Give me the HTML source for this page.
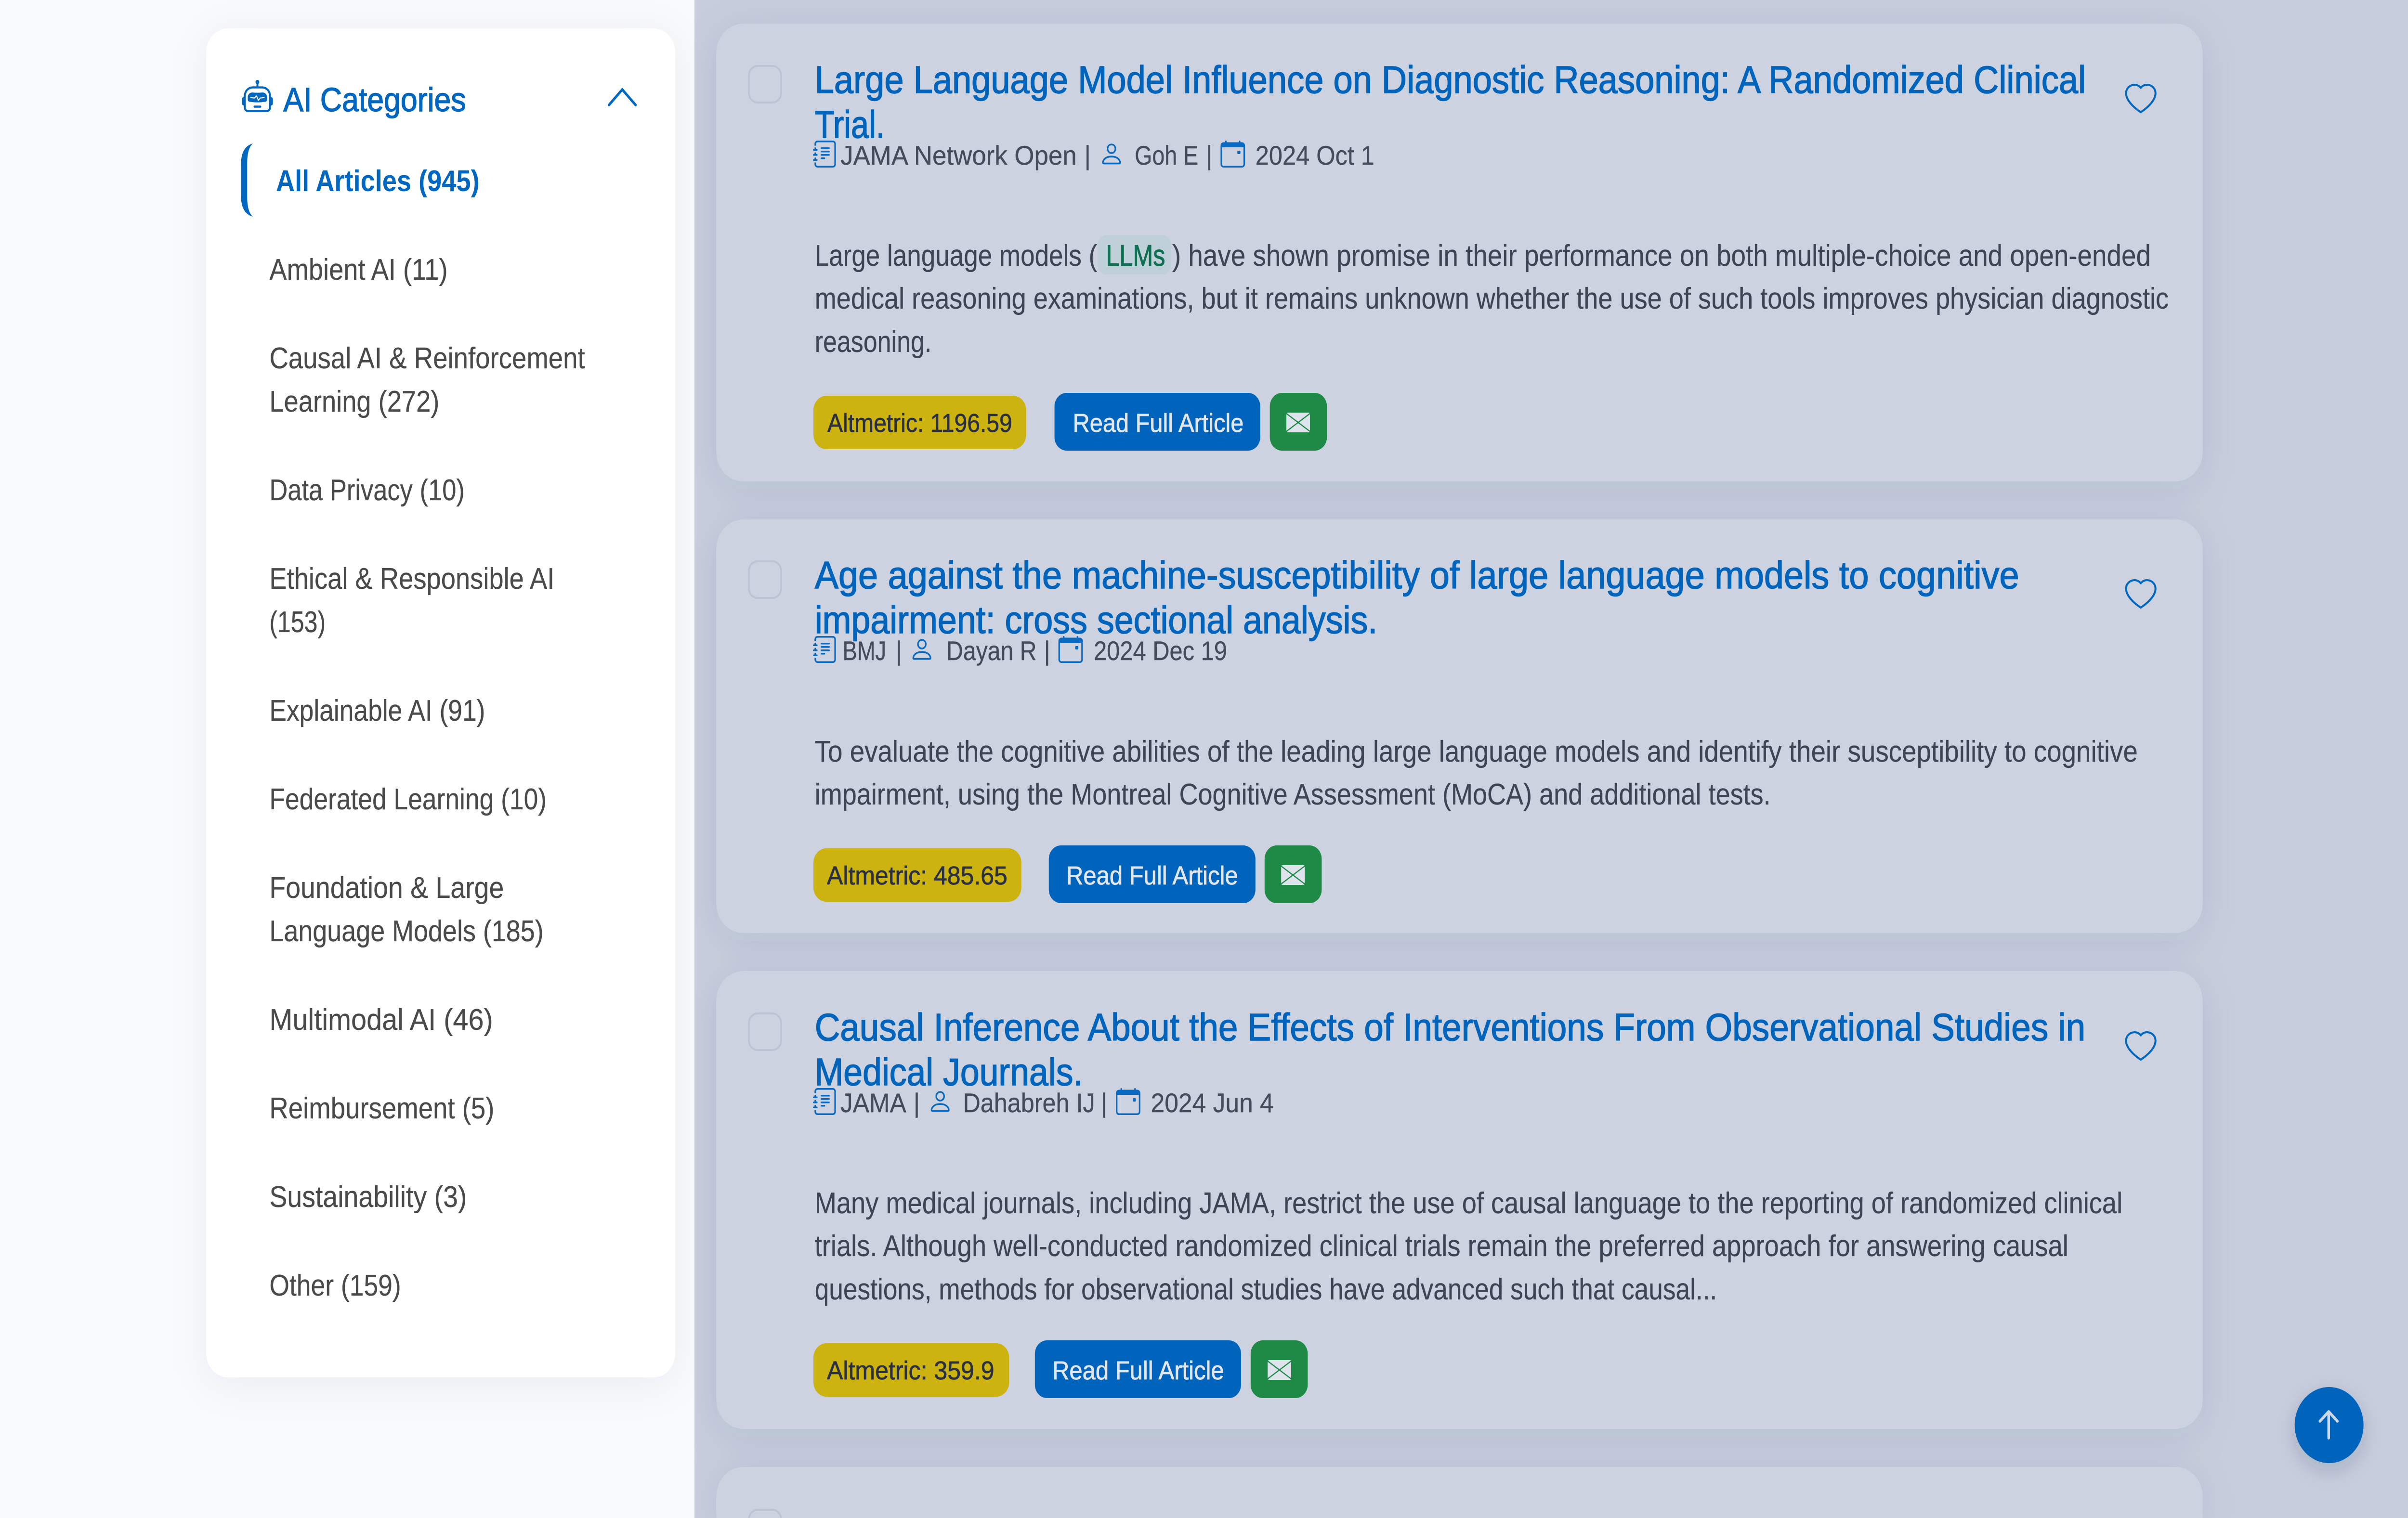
<!DOCTYPE html>
<html lang="en"><head><meta charset="utf-8"><title>AI Articles</title>
<style>
html,body{margin:0;padding:0;width:100%;height:100%;overflow:hidden;background:#f9fafc}
svg.root{position:fixed;left:0;top:0;width:100vw;height:100vh;display:block}
text{font-family:"Liberation Sans",Arial,sans-serif}
.t{font-size:80px;fill:#0064bd;stroke:#0064bd;stroke-width:1.5px}
.m{font-size:56px;fill:#464b5c;stroke:#464b5c;stroke-width:.4px}
.a{font-size:62px;fill:#3f4455;stroke:#3f4455;stroke-width:.3px}
.s{font-size:62px;fill:#4a4a4a;stroke:#4a4a4a;stroke-width:.3px}
.b{font-size:54px;fill:#2a3040;stroke:#2a3040;stroke-width:.8px}
.r{font-size:54px;fill:#e2e6ef;stroke:#e2e6ef;stroke-width:.8px}
</style></head><body>
<svg class="root" viewBox="0 0 5524 3153" preserveAspectRatio="none" xmlns="http://www.w3.org/2000/svg">
<defs>
<filter id="blur" filterUnits="userSpaceOnUse" x="0" y="0" width="5524" height="3153"><feGaussianBlur stdDeviation="42"/></filter>
<filter id="blur2" filterUnits="userSpaceOnUse" x="5100" y="2700" width="424" height="453"><feGaussianBlur stdDeviation="21"/></filter>
<clipPath id="rightClip"><rect x="1593" y="0" width="3931" height="3153"/></clipPath>
<path id="heart" d="m8 2.748-.717-.737C5.6.281 2.514.878 1.4 3.053c-.523 1.023-.641 2.5.314 4.385.92 1.815 2.834 3.989 6.286 6.357 3.452-2.368 5.365-4.542 6.286-6.357.955-1.886.838-3.362.314-4.385C13.486.878 10.4.28 8.717 2.01L8 2.748zM8 15C-7.333 4.868 3.279-3.04 7.824 1.143c.06.055.119.112.176.171a3.12 3.12 0 0 1 .176-.17C12.72-3.042 23.333 4.867 8 15z"/>
<path id="journal" d="M5 10.5a.5.5 0 0 1 .5-.5h2a.5.5 0 0 1 0 1h-2a.5.5 0 0 1-.5-.5zm0-2a.5.5 0 0 1 .5-.5h5a.5.5 0 0 1 0 1h-5a.5.5 0 0 1-.5-.5zm0-2a.5.5 0 0 1 .5-.5h5a.5.5 0 0 1 0 1h-5a.5.5 0 0 1-.5-.5zm0-2a.5.5 0 0 1 .5-.5h5a.5.5 0 0 1 0 1h-5a.5.5 0 0 1-.5-.5zM3 0h10a2 2 0 0 1 2 2v12a2 2 0 0 1-2 2H3a2 2 0 0 1-2-2v-1h1v1a1 1 0 0 0 1 1h10a1 1 0 0 0 1-1V2a1 1 0 0 0-1-1H3a1 1 0 0 0-1 1v1H1V2a2 2 0 0 1 2-2zM1 5v-.5a.5.5 0 0 1 1 0V5h.5a.5.5 0 0 1 0 1h-2a.5.5 0 0 1 0-1H1zm0 3v-.5a.5.5 0 0 1 1 0V8h.5a.5.5 0 0 1 0 1h-2a.5.5 0 0 1 0-1H1zm0 3v-.5a.5.5 0 0 1 1 0v.5h.5a.5.5 0 0 1 0 1h-2a.5.5 0 0 1 0-1H1z"/>
<path id="person" d="M8 8a3 3 0 1 0 0-6 3 3 0 0 0 0 6Zm2-3a2 2 0 1 1-4 0 2 2 0 0 1 4 0Zm4 8c0 1-1 1-1 1H3s-1 0-1-1 1-4 6-4 6 3 6 4Zm-1-.004c-.001-.246-.154-.986-.832-1.664C11.516 10.68 10.289 10 8 10c-2.29 0-3.516.68-4.168 1.332-.678.678-.83 1.418-.832 1.664h10Z"/>
<path id="cal" d="M11 6.5a.5.5 0 0 1 .5-.5h1a.5.5 0 0 1 .5.5v1a.5.5 0 0 1-.5.5h-1a.5.5 0 0 1-.5-.5v-1zM3.5 0a.5.5 0 0 1 .5.5V1h8V.5a.5.5 0 0 1 1 0V1h1a2 2 0 0 1 2 2v11a2 2 0 0 1-2 2H2a2 2 0 0 1-2-2V3a2 2 0 0 1 2-2h1V.5a.5.5 0 0 1 .5-.5zM1 4v10a1 1 0 0 0 1 1h12a1 1 0 0 0 1-1V4H1z"/>
<g id="env"><rect x="-27" y="0" width="54" height="41" rx="3" fill="#dfe3ec"/><path d="M-27 2 27 39M27 2-27 39" stroke="#1e8a46" stroke-width="2.5" fill="none"/></g>
<rect id="check" x="1718" y="137" width="74" height="76" rx="20" fill="#ccd2e0" stroke="#bcc3d3" stroke-width="4"/>
</defs>

<!-- backgrounds -->
<rect x="0" y="0" width="5524" height="3153" fill="#f9fafc"/>
<rect x="473" y="73" width="1076" height="2802" rx="50" fill="#141e3c" fill-opacity=".06" filter="url(#blur)"/>
<rect x="473" y="59" width="1076" height="2802" rx="50" fill="#fff"/>
<rect x="1593" y="0" width="3931" height="3153" fill="#c7cddc"/>
<g clip-path="url(#rightClip)">
<g fill="#1e2850" fill-opacity=".09" filter="url(#blur)">
<rect x="1643" y="63" width="3410" height="951" rx="62"/>
<rect x="1643" y="1093" width="3410" height="859" rx="62"/>
<rect x="1643" y="2031" width="3410" height="951" rx="62"/>
<path d="M1705 3061H4991A62 62 0 0 1 5053 3123V3153H1643V3123A62 62 0 0 1 1705 3061Z"/>
</g>
<g fill="#ccd2e0">
<rect x="1643" y="49" width="3410" height="951" rx="62"/>
<rect x="1643" y="1079" width="3410" height="859" rx="62"/>
<rect x="1643" y="2017" width="3410" height="951" rx="62"/>
<path d="M1705 3047H4991A62 62 0 0 1 5053 3109V3153H1643V3109A62 62 0 0 1 1705 3047Z"/>
</g>
</g>

<!-- sidebar -->
<path transform="translate(555 166) scale(4.44)" fill="#0067c0" d="M6 12.5a.5.5 0 0 1 .5-.5h3a.5.5 0 0 1 0 1h-3a.5.5 0 0 1-.5-.5ZM3 8.062C3 6.76 4.235 5.765 5.53 5.886a26.58 26.58 0 0 0 4.94 0C11.765 5.765 13 6.76 13 8.062v1.157a.933.933 0 0 1-.765.935c-.845.147-2.34.346-4.235.346-1.895 0-3.39-.2-4.235-.346A.933.933 0 0 1 3 9.219V8.062Zm4.542-.827a.25.25 0 0 0-.217.068l-.92.9a24.767 24.767 0 0 1-1.871-.183.25.25 0 0 0-.068.495c.55.076 1.232.149 2.02.193a.25.25 0 0 0 .189-.071l.754-.736.847 1.71a.25.25 0 0 0 .404.062l.932-.97a25.286 25.286 0 0 0 1.922-.188.25.25 0 0 0-.068-.495c-.538.074-1.207.145-1.98.189a.25.25 0 0 0-.166.076l-.754.785-.842-1.7a.25.25 0 0 0-.182-.135Z"/>
<path transform="translate(555 166) scale(4.44)" fill="#0067c0" d="M8.5 1.866a1 1 0 1 0-1 0V3h-2A4.5 4.5 0 0 0 1 7.5V8a1 1 0 0 0-1 1v2a1 1 0 0 0 1 1v1a2 2 0 0 0 2 2h10a2 2 0 0 0 2-2v-1a1 1 0 0 0 1-1V9a1 1 0 0 0-1-1v-.5A4.5 4.5 0 0 0 10.5 3h-2V1.866ZM14 7.5V13a1 1 0 0 1-1 1H3a1 1 0 0 1-1-1V7.5A3.5 3.5 0 0 1 5.5 4h5A3.5 3.5 0 0 1 14 7.5Z"/>
<text x="650" y="231" font-size="70" fill="#0067c0" stroke="#0067c0" stroke-width="1.5" textLength="419" lengthAdjust="spacingAndGlyphs">AI Categories</text>
<path d="M1397 218 1427.500 186 1458 218" fill="none" stroke="#0067c0" stroke-width="5.500" stroke-linecap="round"/>
<path d="M580 298Q553 305 553 340L553 408Q553 443 580 450Q567 440 567 408L567 340Q567 308 580 298Z" fill="#0067c0"/>
<text x="633" y="397" font-size="62" font-weight="700" fill="#0067c0" textLength="467" lengthAdjust="spacingAndGlyphs">All Articles (945)</text>
<text class="s" x="618" y="581" textLength="409" lengthAdjust="spacingAndGlyphs">Ambient AI (11)</text>
<text class="s" x="618" y="765" textLength="724" lengthAdjust="spacingAndGlyphs">Causal AI &amp; Reinforcement</text>
<text class="s" x="618" y="855" textLength="390" lengthAdjust="spacingAndGlyphs">Learning (272)</text>
<text class="s" x="618" y="1039" textLength="448" lengthAdjust="spacingAndGlyphs">Data Privacy (10)</text>
<text class="s" x="618" y="1223" textLength="654" lengthAdjust="spacingAndGlyphs">Ethical &amp; Responsible AI</text>
<text class="s" x="618" y="1313" textLength="129" lengthAdjust="spacingAndGlyphs">(153)</text>
<text class="s" x="618" y="1497" textLength="495" lengthAdjust="spacingAndGlyphs">Explainable AI (91)</text>
<text class="s" x="618" y="1681" textLength="636" lengthAdjust="spacingAndGlyphs">Federated Learning (10)</text>
<text class="s" x="618" y="1865" textLength="538" lengthAdjust="spacingAndGlyphs">Foundation &amp; Large</text>
<text class="s" x="618" y="1955" textLength="629" lengthAdjust="spacingAndGlyphs">Language Models (185)</text>
<text class="s" x="618" y="2139" textLength="513" lengthAdjust="spacingAndGlyphs">Multimodal AI (46)</text>
<text class="s" x="618" y="2323" textLength="516" lengthAdjust="spacingAndGlyphs">Reimbursement (5)</text>
<text class="s" x="618" y="2507" textLength="453" lengthAdjust="spacingAndGlyphs">Sustainability (3)</text>
<text class="s" x="618" y="2691" textLength="302" lengthAdjust="spacingAndGlyphs">Other (159)</text>

<!-- card 1 -->
<use href="#check"/>
<text class="t" x="1869" y="193" textLength="2916" lengthAdjust="spacingAndGlyphs">Large Language Model Influence on Diagnostic Reasoning: A Randomized Clinical</text>
<text class="t" x="1869" y="286" textLength="161" lengthAdjust="spacingAndGlyphs">Trial.</text>
<use href="#heart" fill="#0067c0" transform="translate(4875 174) scale(4.5 4.1)"/>
<use href="#journal" fill="#0a69c0" transform="translate(1865 292) scale(3.5)"/>
<text class="m" x="1928" y="342" textLength="542" lengthAdjust="spacingAndGlyphs">JAMA Network Open</text>
<text class="m" x="2495" y="342" text-anchor="middle">|</text>
<use href="#person" fill="#0a69c0" transform="translate(2521 291) scale(3.6)"/>
<text class="m" x="2603" y="342" textLength="146" lengthAdjust="spacingAndGlyphs">Goh E</text>
<text class="m" x="2774" y="342" text-anchor="middle">|</text>
<use href="#cal" fill="#0a69c0" transform="translate(2800 292) scale(3.5)"/>
<text class="m" x="2880" y="342" textLength="273" lengthAdjust="spacingAndGlyphs">2024 Oct 1</text>
<rect x="2518" y="488" width="169" height="82" rx="20" fill="#bfd0d8"/>
<text class="a" x="1869" y="552" textLength="648" lengthAdjust="spacingAndGlyphs">Large language models (</text>
<text x="2537" y="552" font-size="62" fill="#0e6f52" stroke="#0e6f52" stroke-width="1" textLength="136" lengthAdjust="spacingAndGlyphs">LLMs</text>
<text class="a" x="2689" y="552" textLength="2245" lengthAdjust="spacingAndGlyphs">) have shown promise in their performance on both multiple-choice and open-ended</text>
<text class="a" x="1869" y="641" textLength="3106" lengthAdjust="spacingAndGlyphs">medical reasoning examinations, but it remains unknown whether the use of such tools improves physician diagnostic</text>
<text class="a" x="1869" y="731" textLength="268" lengthAdjust="spacingAndGlyphs">reasoning.</text>
<rect x="1866" y="822" width="488" height="111" rx="30" fill="#ccb30f"/>
<text class="b" x="1898" y="897" textLength="424" lengthAdjust="spacingAndGlyphs">Altmetric: 1196.59</text>
<rect x="2419" y="816" width="472" height="120" rx="28" fill="#0064bd"/>
<text class="r" x="2461" y="897" textLength="392" lengthAdjust="spacingAndGlyphs">Read Full Article</text>
<rect x="2913" y="816" width="131" height="120" rx="28" fill="#1e8a46"/>
<use href="#env" transform="translate(2978 857)"/>

<!-- card 2 -->
<use href="#check" y="1029"/>
<text class="t" x="1869" y="1222" textLength="2763" lengthAdjust="spacingAndGlyphs">Age against the machine-susceptibility of large language models to cognitive</text>
<text class="t" x="1869" y="1315" textLength="1291" lengthAdjust="spacingAndGlyphs">impairment: cross sectional analysis.</text>
<use href="#heart" fill="#0067c0" transform="translate(4875 1203) scale(4.5 4.1)"/>
<use href="#journal" fill="#0a69c0" transform="translate(1865 1321) scale(3.5)"/>
<text class="m" x="1933" y="1371" textLength="100" lengthAdjust="spacingAndGlyphs">BMJ</text>
<text class="m" x="2062" y="1371" text-anchor="middle">|</text>
<use href="#person" fill="#0a69c0" transform="translate(2086 1320) scale(3.6)"/>
<text class="m" x="2171" y="1371" textLength="207" lengthAdjust="spacingAndGlyphs">Dayan R</text>
<text class="m" x="2402" y="1371" text-anchor="middle">|</text>
<use href="#cal" fill="#0a69c0" transform="translate(2428 1321) scale(3.5)"/>
<text class="m" x="2509" y="1371" textLength="306" lengthAdjust="spacingAndGlyphs">2024 Dec 19</text>
<text class="a" x="1869" y="1582" textLength="3035" lengthAdjust="spacingAndGlyphs">To evaluate the cognitive abilities of the leading large language models and identify their susceptibility to cognitive</text>
<text class="a" x="1869" y="1671" textLength="2193" lengthAdjust="spacingAndGlyphs">impairment, using the Montreal Cognitive Assessment (MoCA) and additional tests.</text>
<rect x="1866" y="1762" width="477" height="111" rx="30" fill="#ccb30f"/>
<text class="b" x="1897" y="1837" textLength="414" lengthAdjust="spacingAndGlyphs">Altmetric: 485.65</text>
<rect x="2406" y="1756" width="474" height="120" rx="28" fill="#0064bd"/>
<text class="r" x="2446" y="1837" textLength="394" lengthAdjust="spacingAndGlyphs">Read Full Article</text>
<rect x="2901" y="1756" width="131" height="120" rx="28" fill="#1e8a46"/>
<use href="#env" transform="translate(2966 1797)"/>

<!-- card 3 -->
<use href="#check" y="1968"/>
<text class="t" x="1869" y="2161" textLength="2915" lengthAdjust="spacingAndGlyphs">Causal Inference About the Effects of Interventions From Observational Studies in</text>
<text class="t" x="1869" y="2254" textLength="615" lengthAdjust="spacingAndGlyphs">Medical Journals.</text>
<use href="#heart" fill="#0067c0" transform="translate(4875 2142) scale(4.5 4.1)"/>
<use href="#journal" fill="#0a69c0" transform="translate(1865 2260) scale(3.5)"/>
<text class="m" x="1928" y="2310" textLength="151" lengthAdjust="spacingAndGlyphs">JAMA</text>
<text class="m" x="2103" y="2310" text-anchor="middle">|</text>
<use href="#person" fill="#0a69c0" transform="translate(2128 2259) scale(3.6)"/>
<text class="m" x="2209" y="2310" textLength="303" lengthAdjust="spacingAndGlyphs">Dahabreh IJ</text>
<text class="m" x="2533" y="2310" text-anchor="middle">|</text>
<use href="#cal" fill="#0a69c0" transform="translate(2560 2260) scale(3.5)"/>
<text class="m" x="2640" y="2310" textLength="282" lengthAdjust="spacingAndGlyphs">2024 Jun 4</text>
<text class="a" x="1869" y="2520" textLength="3000" lengthAdjust="spacingAndGlyphs">Many medical journals, including JAMA, restrict the use of causal language to the reporting of randomized clinical</text>
<text class="a" x="1869" y="2609" textLength="2876" lengthAdjust="spacingAndGlyphs">trials. Although well-conducted randomized clinical trials remain the preferred approach for answering causal</text>
<text class="a" x="1869" y="2699" textLength="2070" lengthAdjust="spacingAndGlyphs">questions, methods for observational studies have advanced such that causal...</text>
<rect x="1866" y="2790" width="449" height="111" rx="30" fill="#ccb30f"/>
<text class="b" x="1897" y="2865" textLength="384" lengthAdjust="spacingAndGlyphs">Altmetric: 359.9</text>
<rect x="2374" y="2784" width="473" height="120" rx="28" fill="#0064bd"/>
<text class="r" x="2414" y="2865" textLength="394" lengthAdjust="spacingAndGlyphs">Read Full Article</text>
<rect x="2869" y="2784" width="131" height="120" rx="28" fill="#1e8a46"/>
<use href="#env" transform="translate(2935 2825)"/>

<!-- card 4 -->
<use href="#check" y="2999"/>

<!-- top button -->
<circle cx="5343" cy="2974" r="79" fill="#141e46" fill-opacity=".18" filter="url(#blur2)"/>
<circle cx="5343" cy="2960" r="79" fill="#0064bd"/>
<path d="M5342 2987V2933M5322 2952 5342 2932 5362 2952" fill="none" stroke="#cdd8e8" stroke-width="6" stroke-linecap="round" stroke-linejoin="round"/>
</svg>
</body></html>
